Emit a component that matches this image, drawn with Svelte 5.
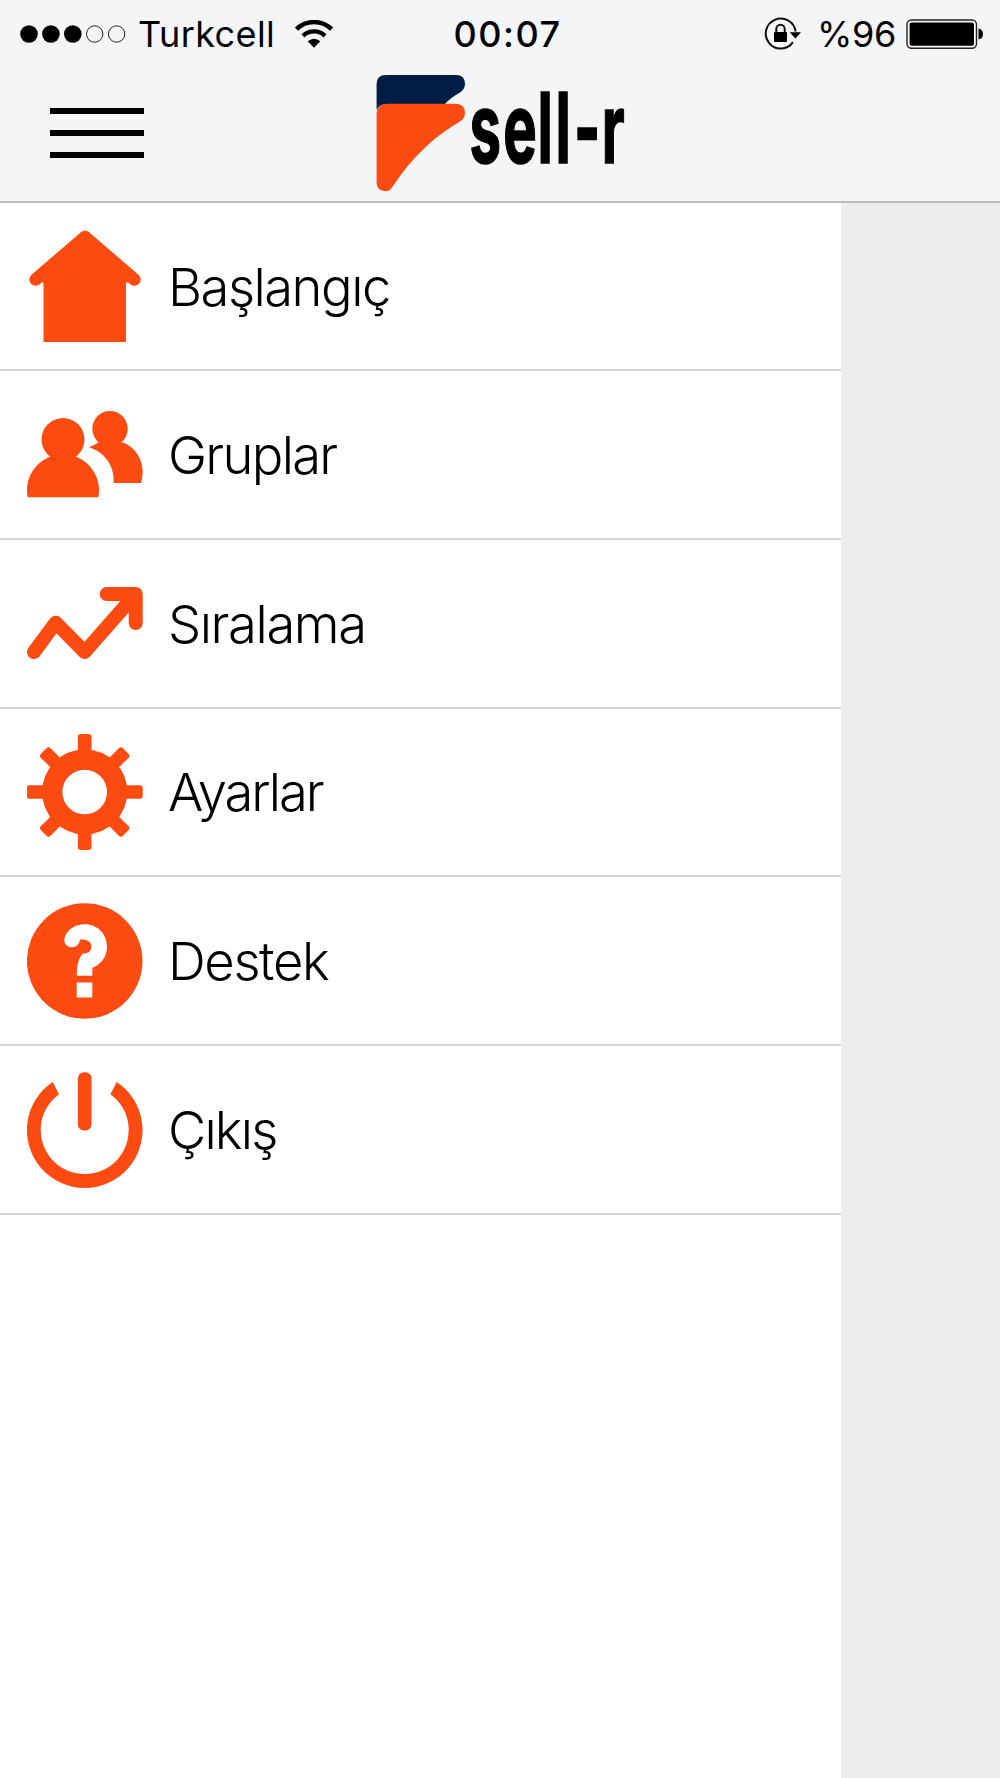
<script>
    const menu = [
        { id: 'home', label: 'Başlangıç', spacing: -1.5 },
        { id: 'groups', label: 'Gruplar', spacing: -1.7 },
        { id: 'ranking', label: 'Sıralama', spacing: -1.4 },
        { id: 'settings', label: 'Ayarlar', spacing: -2 },
        { id: 'support', label: 'Destek', spacing: -1.4 },
        { id: 'logout', label: 'Çıkış', spacing: -1.8 }
    ];

    const signal = [true, true, true, false, false];
    const teeth = [0, 45, 90, 135, 180, 225, 270, 315];
</script>

<div class="screen">
    <header>
        <div class="status">
            <div class="status-left">
                <svg class="signal" width="108" height="20" viewBox="0 0 108 20">
                    {#each signal as on, i}
                        <circle
                            cx={9 + i * 21.9}
                            cy="10"
                            r={on ? 8.8 : 8.2}
                            fill={on ? '#000' : 'none'}
                            stroke={on ? 'none' : '#222'}
                        />
                    {/each}
                </svg>
                <span class="carrier">Turkcell</span>
                <svg class="wifi" width="38" height="28" viewBox="0 0 38 28">
                    <path d="M1.5 9.2 A25 25 0 0 1 36.5 9.2" fill="none" stroke="#000" stroke-width="4.6" />
                    <path d="M8 15.8 A16 16 0 0 1 30 15.8" fill="none" stroke="#000" stroke-width="4.4" />
                    <path d="M12.7 21.3 Q19 16.2 25.3 21.3 L19 27.8 Z" />
                </svg>
            </div>
            <span class="clock">00:07</span>
            <div class="status-right">
                <svg class="lock" width="38" height="34" viewBox="0 0 38 34">
                    <path d="M31.6 14.5 A15 15 0 1 0 29 25.2" fill="none" stroke="#111" stroke-width="2" />
                    <path d="M25.8 15.2 H37 L31.4 21.6 Z" />
                    <rect x="10" y="15" width="13" height="10" rx="0.8" />
                    <path d="M12.3 15.5 V12 a4.2 4.2 0 0 1 8.4 0 V15.5" fill="none" stroke="#111" stroke-width="2" />
                </svg>
                <span class="percent">%96</span>
                <svg class="battery" width="78" height="30" viewBox="0 0 78 30">
                    <rect x="1" y="1" width="69.5" height="28.2" rx="4.5" fill="none" stroke="#222" stroke-width="1.4" />
                    <rect x="3.6" y="3.4" width="64.4" height="23.4" rx="2" />
                    <path d="M72.5 9.5 Q77 10.5 77 15 Q77 19.5 72.5 20.5 Z" />
                </svg>
            </div>
        </div>
        <nav>
            <button class="burger" aria-label="Menü">
                <i></i>
                <i></i>
                <i></i>
            </button>
            <svg class="logo" width="254" height="118" viewBox="376 74 254 118">
                <path fill="#021d45" d="M376.6 110 V84 Q376.6 75 386 75 H456 Q465 75 465 84 Q465 89 460 92.5 Q450 98 444.5 104.5 H387 Q379 104 376.6 110 Z" />
                <path fill="#fb4b11" d="M376.6 113 Q377 104 387 103.7 H456 Q465 104 465 113 Q465 118 460 121.5 C435 136 413 156 393 186 Q390 191.3 385.5 191.3 Q376.6 191 376.6 182 Z" />
                <g transform="translate(0 163) scale(0.58 1)">
                    <text x="809.6 867.7 926.7 957.8 989.7 1037.3">sell-r</text>
                </g>
            </svg>
        </nav>
    </header>

    <div class="body">
        <ul class="menu">
            {#each menu as item}
                <li>
                    <svg class="icon" width="116" height="116" viewBox="0 0 116 116">
                        {#if item.id === 'home'}
                            <path d="M8.6 51.5 L58 9 L107.4 51.5" fill="none" stroke="#fb4b11" stroke-width="12.6" stroke-linecap="round" stroke-linejoin="round" />
                            <path d="M58 9 L107 51 L99 55 V114 H16.5 V55 L9 51 Z" />
                        {:else if item.id === 'groups'}
                            <circle cx="36" cy="43.5" r="21.5" />
                            <path d="M0.7 101.3 A36 36 0 1 1 71.3 101.3 Z" />
                            <circle cx="83" cy="32.7" r="17.7" />
                            <path d="M62 51.3 Q67 49.8 71.3 46.3 H95.3 C108 51 115.7 63 115.7 76 Q115.7 82 113.8 87 H86.7 C87.7 69 77 56 62 51.3 Z" />
                        {:else if item.id === 'ranking'}
                            <path d="M7 87 L28.7 57.7 L57.7 87 L108.7 29 M79.7 29 H108.7 V58" fill="none" stroke="#fb4b11" stroke-width="14" stroke-linecap="round" stroke-linejoin="round" />
                            <path d="M88 29 H108 V50 Z" />
                        {:else if item.id === 'settings'}
                            <circle cx="57.7" cy="58" r="32.4" fill="none" stroke="#fb4b11" stroke-width="20.2" />
                            {#each teeth as angle}
                                <rect x="50.9" y="0" width="13.6" height="20" rx="3" transform="rotate({angle} 57.7 58)" />
                            {/each}
                        {:else if item.id === 'support'}
                            <circle cx="57.7" cy="58" r="57.8" />
                            <path fill="#fff" d="M37.3 36.9 C38.5 27 48 21.2 57.7 21.2 C70.5 21.2 80 31 80 43.8 C80 54 73.5 62 65.3 64.8 V72.8 H49.7 C49.7 63 51.5 55 56 50.5 C61 50.8 64.3 48.5 64.3 43.5 C64.3 38.5 60 36 53 36.5 C52.5 41 49.5 44.2 45 44.2 C40.5 44.2 37 41 37.3 36.9 Z" />
                            <rect fill="#fff" x="49.7" y="79.5" width="15.6" height="15" />
                        {:else}
                            <path d="M25.7 10 A57.8 57.8 0 1 0 89.7 10 L83.4 22.3 A44 44 0 1 1 32 22.3 Z" />
                            <rect x="50.9" y="0.3" width="13.6" height="58.2" rx="6" />
                        {/if}
                    </svg>
                    <span class="label" style="letter-spacing: {item.spacing}px">{item.label}</span>
                </li>
            {/each}
        </ul>
        <div class="overlay"></div>
    </div>
</div>

<style>
    :global(body) {
        margin: 0;
        background: #fff;
    }

    .screen {
        width: 1000px;
        height: 1778px;
        display: flex;
        flex-direction: column;
        overflow: hidden;
        font-family: Inter, "Liberation Sans", sans-serif;
        color: #000;
    }

    header {
        box-sizing: border-box;
        height: 203px;
        flex: none;
        background: #f4f5f7;
        border-bottom: 2px solid #b9babb;
    }

    .status {
        display: grid;
        grid-template-columns: 1fr auto 1fr;
        align-items: center;
        height: 67px;
        padding: 0 16px 0 20px;
        font-size: 36px;
        line-height: 40px;
    }

    .status-left,
    .status-right {
        display: flex;
        align-items: center;
    }

    .status-right {
        justify-content: flex-end;
    }

    .carrier {
        margin-left: 10px;
        letter-spacing: 0.4px;
    }

    .wifi {
        margin-left: 20px;
    }

    .clock {
        padding-left: 11px;
        font-weight: 550;
        letter-spacing: 1.5px;
    }

    .percent {
        margin: 0 10px 0 15px;
        letter-spacing: -0.3px;
    }

    nav {
        display: flex;
        align-items: center;
        height: 132px;
        padding-left: 50px;
    }

    .burger {
        display: flex;
        flex-direction: column;
        gap: 16px;
        width: 94px;
        padding: 0;
        border: none;
        background: none;
        cursor: pointer;
    }

    .burger i {
        height: 6px;
        background: #000;
    }

    .logo {
        margin-left: 232px;
        overflow: visible;
    }

    .logo text {
        font-size: 97px;
        font-weight: 700;
        stroke: #000;
        stroke-width: 1.6px;
    }

    .body {
        display: flex;
        flex: 1;
    }

    .menu {
        width: 841px;
        margin: 0;
        padding: 0;
        list-style: none;
        background: #fff;
    }

    .menu li {
        box-sizing: border-box;
        display: flex;
        align-items: center;
        height: 168.8px;
        padding-left: 27px;
        border-bottom: 2px solid #d3d4d7;
    }

    .menu li:first-child {
        height: 168px;
    }

    .icon {
        flex: none;
        fill: #fb4b11;
    }

    .label {
        margin-left: 25px;
        padding-top: 1px;
        font-size: 52.5px;
        font-weight: 300;
        line-height: 64px;
        white-space: nowrap;
    }

    .overlay {
        flex: 1;
        background: #ededed;
    }
</style>
